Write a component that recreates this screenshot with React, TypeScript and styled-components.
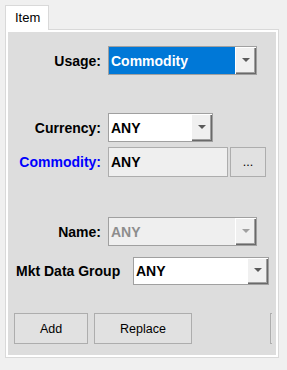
import React from 'react'
import styled, { createGlobalStyle } from 'styled-components'

const GlobalStyle = createGlobalStyle`
  html, body {
    margin: 0;
    padding: 0;
    background: #f0f0f0;
  }
  body {
    font-family: "Liberation Sans", Arial, sans-serif;
  }
`

const Page = styled.div`
  width: 287px;
  height: 370px;
  padding: 5px 0 0 5px;
  box-sizing: border-box;
`

const TabStrip = styled.div`
  display: flex;
  height: 25px;
  margin-bottom: -1px;
  position: relative;
  z-index: 1;
`

const Tab = styled.div`
  width: 44px;
  height: 25px;
  box-sizing: border-box;
  background: #ffffff;
  border: 1px solid #d9d9d9;
  border-bottom: none;
  font-size: 13px;
  color: #000;
  padding: 4px 0 0 9px;
`

const Panel = styled.div`
  width: 274px;
  height: 329px;
  box-sizing: border-box;
  border: 1px solid #d9d9d9;
  background: #ffffff;
  padding: 2px;
`

const Body = styled.div`
  height: 100%;
  background: #dddddd;
  padding: 14px 0 0 8px;
  box-sizing: border-box;
  display: flex;
  flex-direction: column;
`

const Row = styled.div<{ top: number; h: number }>`
  display: flex;
  align-items: center;
  margin-top: ${({ top }) => top}px;
  height: ${({ h }) => h}px;
`

const Label = styled.div<{ color?: string }>`
  width: 85px;
  margin-right: 7px;
  text-align: right;
  font-size: 14px;
  font-weight: bold;
  color: ${({ color }) => color || '#000'};
  white-space: nowrap;
`

const FreeLabel = styled.div`
  font-size: 14px;
  font-weight: bold;
  color: #000;
  white-space: nowrap;
  width: 117px;
`

const Select = styled.div<{ w: number; bg?: string }>`
  display: flex;
  width: ${({ w }) => w}px;
  height: 100%;
  box-sizing: border-box;
  border: 1px solid #a0a0a0;
  background: ${({ bg }) => bg || '#ffffff'};
`

const Value = styled.div<{ color?: string }>`
  flex: 1;
  display: flex;
  align-items: center;
  padding-left: 2px;
  font-size: 14px;
  font-weight: bold;
  color: ${({ color }) => color || '#000'};
`

const ArrowButton = styled.div<{ disabled?: boolean }>`
  width: 21px;
  height: 100%;
  background: #f0f0f0;
  box-shadow: inset 1px 1px #ffffff, inset -1px -1px #696969, inset -2px -2px #a0a0a0;
  display: flex;
  align-items: center;
  justify-content: center;
  &::after {
    content: '';
    border-left: 4px solid transparent;
    border-right: 4px solid transparent;
    border-top: 4px solid ${({ disabled }) => (disabled ? '#a0a0a0' : '#5a5a5a')};
    margin-top: -2px;
  }
`

const TextBox = styled.div`
  width: 120px;
  height: 100%;
  box-sizing: border-box;
  border: 1px solid #adadad;
  background: #efefef;
  display: flex;
  align-items: center;
  padding-left: 2px;
  font-size: 14px;
  font-weight: bold;
  color: #000;
`

const Button = styled.div<{ w: number; ml?: number }>`
  flex-shrink: 0;
  width: ${({ w }) => w}px;
  height: 100%;
  margin-left: ${({ ml }) => ml || 0}px;
  box-sizing: border-box;
  border: 1px solid #adadad;
  background: #e1e1e1;
  display: flex;
  align-items: center;
  justify-content: center;
  font-size: 12.5px;
  color: #000;
`

const ButtonRow = styled.div`
  display: flex;
  margin-top: 28px;
  margin-left: -2px;
  width: 258px;
  height: 31px;
  overflow: hidden;
`

function Combo({ w, value, bg, color, disabled }: { w: number; value: string; bg?: string; color?: string; disabled?: boolean }) {
  return (
    <Select w={w} bg={bg}>
      <Value color={color}>{value}</Value>
      <ArrowButton disabled={disabled} />
    </Select>
  )
}

export default function App() {
  return (
    <Page>
      <GlobalStyle />
      <TabStrip>
        <Tab>Item</Tab>
      </TabStrip>
      <Panel>
        <Body>
          <Row top={0} h={29}>
            <Label>Usage:</Label>
            <Combo w={149} value="Commodity" bg="#0078d7" color="#ffffff" />
          </Row>
          <Row top={38} h={29}>
            <Label>Currency:</Label>
            <Combo w={105} value="ANY" />
          </Row>
          <Row top={5} h={30}>
            <Label color="#0000ff">Commodity:</Label>
            <TextBox>ANY</TextBox>
            <Button w={36} ml={2}>...</Button>
          </Row>
          <Row top={40} h={29}>
            <Label>Name:</Label>
            <Combo w={149} value="ANY" bg="#efefef" color="#8d8d8d" disabled />
          </Row>
          <Row top={11} h={28}>
            <FreeLabel>Mkt Data Group</FreeLabel>
            <Combo w={136} value="ANY" />
          </Row>
          <ButtonRow>
            <Button w={74}>Add</Button>
            <Button w={98} ml={6}>Replace</Button>
            <Button w={80} ml={78} />
          </ButtonRow>
        </Body>
      </Panel>
    </Page>
  )
}
